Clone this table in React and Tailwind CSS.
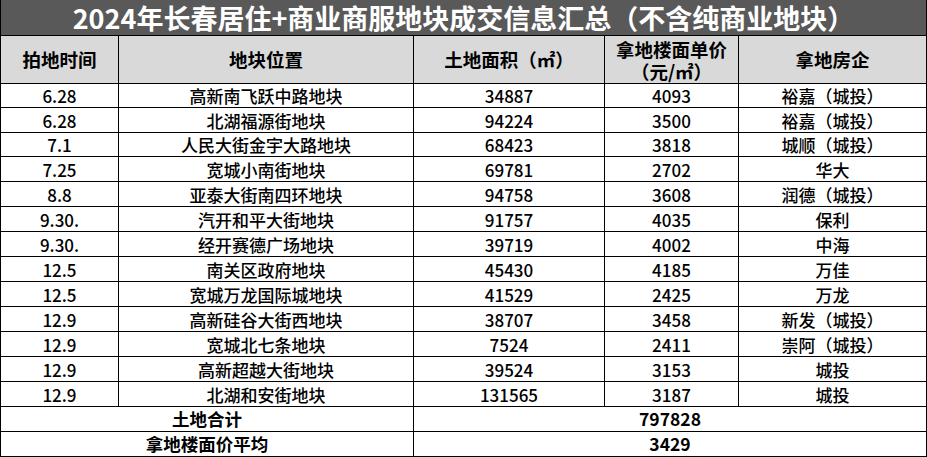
import React from 'react'

const rows = [
  ['6.28', '高新南飞跃中路地块', '34887', '4093', '裕嘉（城投）'],
  ['6.28', '北湖福源街地块', '94224', '3500', '裕嘉（城投）'],
  ['7.1', '人民大街金宇大路地块', '68423', '3818', '城顺（城投）'],
  ['7.25', '宽城小南街地块', '69781', '2702', '华大'],
  ['8.8', '亚泰大街南四环地块', '94758', '3608', '润德（城投）'],
  ['9.30.', '汽开和平大街地块', '91757', '4035', '保利'],
  ['9.30.', '经开赛德广场地块', '39719', '4002', '中海'],
  ['12.5', '南关区政府地块', '45430', '4185', '万佳'],
  ['12.5', '宽城万龙国际城地块', '41529', '2425', '万龙'],
  ['12.9', '高新硅谷大街西地块', '38707', '3458', '新发（城投）'],
  ['12.9', '宽城北七条地块', '7524', '2411', '崇阿（城投）'],
  ['12.9', '高新超越大街地块', '39524', '3153', '城投'],
  ['12.9', '北湖和安街地块', '131565', '3187', '城投'],
]

const cols = 'grid grid-cols-[118px_295px_191px_134px_188px]'
const cell = 'flex items-center justify-center border-r border-b border-black whitespace-nowrap'

const App = () => {
  return (
    <div className="w-[927px] h-[457px] bg-white border-l border-black text-black font-['Noto_Sans_CJK_SC',sans-serif]">
      <div className="h-[36px] bg-[#595959] border-r border-b border-black flex items-center justify-center text-white text-[27px] font-bold leading-[34px] whitespace-nowrap">
        2024年长春居住+商业商服地块成交信息汇总（不含纯商业地块）
      </div>
      <div className={`${cols} h-[48px] bg-[#d9d9d9] font-bold text-[18.5px] leading-none`}>
        <div className={cell}>拍地时间</div>
        <div className={cell}>地块位置</div>
        <div className={cell}>土地面积（㎡）</div>
        <div className={`${cell} flex-col leading-[22px]`}>
          <span>拿地楼面单价</span>
          <span>（元/㎡）</span>
        </div>
        <div className={cell}>拿地房企</div>
      </div>
      {rows.map((r, i) => (
        <div key={i} className={`${cols} ${i === 0 || i === 2 ? 'h-[24px]' : 'h-[25px]'} text-[17px] font-medium leading-none`}>
          {r.map((v, j) => (
            <div key={j} className={cell}>{v}</div>
          ))}
        </div>
      ))}
      <div className="grid grid-cols-[413px_513px] h-[25px] font-bold text-[17.5px] leading-none">
        <div className={cell}>土地合计</div>
        <div className={cell}>797828</div>
      </div>
      <div className="grid grid-cols-[413px_513px] h-[25px] font-bold text-[17.5px] leading-none">
        <div className={cell}>拿地楼面价平均</div>
        <div className={cell}>3429</div>
      </div>
    </div>
  )
}

export default App
